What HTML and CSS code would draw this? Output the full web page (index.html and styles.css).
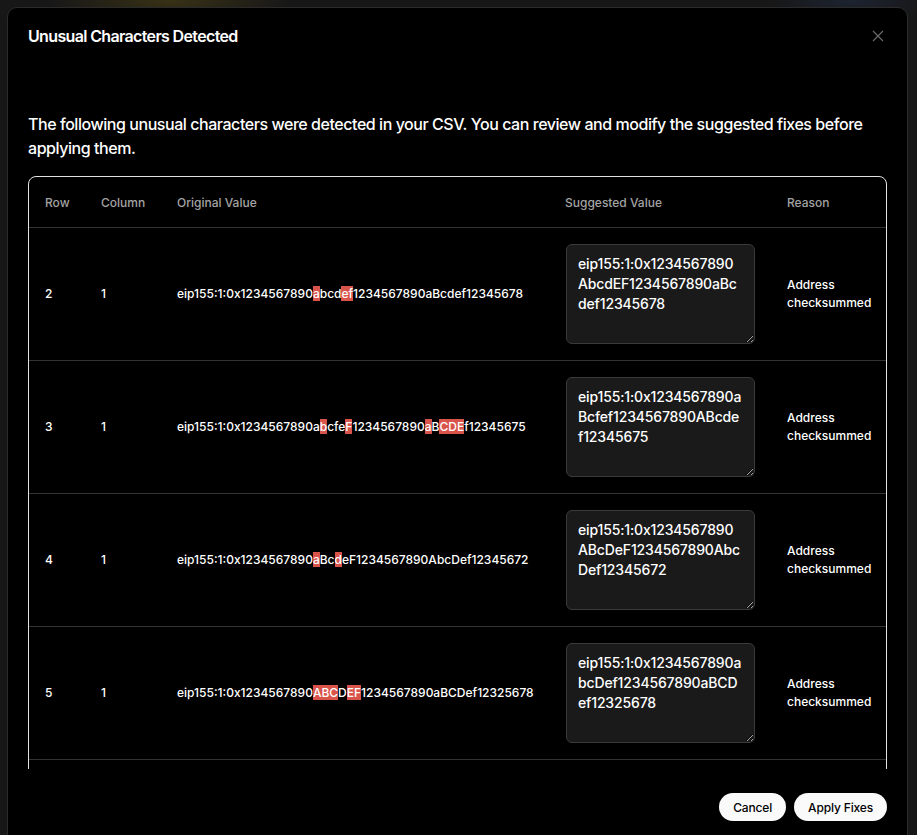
FILE: index.html
```html
<!DOCTYPE html>
<html lang="en">
<head>
<meta charset="utf-8">
<title>Unusual Characters Detected</title>
<link rel="stylesheet" href="styles.css">
</head>
<body>
<div class="backdrop">
  <div class="modal">
    <div class="modal-header">
      <h2 class="modal-title">Unusual Characters Detected</h2>
      <button class="close" aria-label="Close">
        <svg width="12" height="12" viewBox="0 0 12 12"><path d="M1 1 L11 11 M11 1 L1 11" stroke="currentColor" stroke-width="1.2" fill="none"/></svg>
      </button>
    </div>
    <div class="modal-body">
      <p class="desc">The following unusual characters were detected in your CSV. You can review and modify the suggested fixes before applying them.</p>
      <div class="table-wrap">
        <table class="fixes">
          <colgroup>
            <col class="c-row"><col class="c-col"><col class="c-orig"><col class="c-sugg"><col class="c-reason">
          </colgroup>
          <thead>
            <tr><th>Row</th><th>Column</th><th>Original Value</th><th>Suggested Value</th><th>Reason</th></tr>
          </thead>
          <tbody>
            <tr>
              <td>2</td><td>1</td>
              <td class="orig">eip155:1:0x1234567890<span class="hl">a</span>bcd<span class="hl">ef</span>1234567890aBcdef12345678</td>
              <td><textarea class="sugg">eip155:1:0x1234567890AbcdEF1234567890aBcdef12345678</textarea></td>
              <td class="reason">Address checksummed</td>
            </tr>
            <tr>
              <td>3</td><td>1</td>
              <td class="orig">eip155:1:0x1234567890a<span class="hl">b</span>cfe<span class="hl">F</span>1234567890<span class="hl">a</span>B<span class="hl">CDE</span>f12345675</td>
              <td><textarea class="sugg">eip155:1:0x1234567890aBcfef1234567890ABcdef12345675</textarea></td>
              <td class="reason">Address checksummed</td>
            </tr>
            <tr>
              <td>4</td><td>1</td>
              <td class="orig">eip155:1:0x1234567890<span class="hl">a</span>Bc<span class="hl">d</span>eF1234567890AbcDef12345672</td>
              <td><textarea class="sugg">eip155:1:0x1234567890ABcDeF1234567890AbcDef12345672</textarea></td>
              <td class="reason">Address checksummed</td>
            </tr>
            <tr>
              <td>5</td><td>1</td>
              <td class="orig">eip155:1:0x1234567890<span class="hl">ABC</span>D<span class="hl">EF</span>1234567890aBCDef12325678</td>
              <td><textarea class="sugg">eip155:1:0x1234567890abcDef1234567890aBCDef12325678</textarea></td>
              <td class="reason">Address checksummed</td>
            </tr>
          </tbody>
        </table>
      </div>
    </div>
    <div class="modal-footer">
      <button class="btn">Cancel</button>
      <button class="btn">Apply Fixes</button>
    </div>
  </div>
</div>
</body>
</html>
```
FILE: styles.css
```css
* { box-sizing: border-box; }
html, body {
  margin: 0;
  height: 100%;
  overflow: hidden;
}
body {
  background:
    radial-gradient(ellipse 120px 30px at 170px 0px, rgba(120, 100, 20, 0.35), transparent),
    radial-gradient(ellipse 80px 25px at 850px 0px, rgba(40, 60, 100, 0.35), transparent),
    #171717;
  font-family: Inter, "Liberation Sans", sans-serif;
  color: #fff;
}
.backdrop {
  padding: 7px 9px 0 7px;
}
.modal {
  background: #000;
  border: 1px solid #2b2b2b;
  border-radius: 10px;
  height: 860px;
  padding: 16px 20px;
  display: flex;
  flex-direction: column;
}
.modal-header {
  display: flex;
  justify-content: space-between;
  align-items: center;
  height: 24px;
}
.modal-title {
  margin: 0;
  font-size: 16px;
  line-height: 24px;
  font-weight: 600;
  letter-spacing: -0.65px;
}
.close {
  background: none;
  border: 0;
  padding: 0;
  color: #6b6b6b;
  width: 12px;
  height: 12px;
  display: flex;
  margin-right: 3px;
}
.modal-body {
  margin-top: 64px;
  height: 657px;
  overflow: hidden;
  display: flex;
  flex-direction: column;
}
.desc {
  margin: 0 0 16px;
  font-size: 16px;
  line-height: 24px;
  font-weight: 500;
  letter-spacing: -0.45px;
}
.table-wrap {
  border: 1px solid #e2e2e2;
  border-radius: 8px;
  flex: none;
  min-height: 700px;
}
.fixes {
  width: 100%;
  border-collapse: collapse;
  table-layout: fixed;
  font-size: 12px;
}
.c-row { width: 56px; }
.c-col { width: 76px; }
.c-orig { width: 388px; }
.c-sugg { width: 222px; }
.c-reason { width: auto; }
.fixes th {
  text-align: left;
  color: #a3a3a3;
  font-weight: 500;
  height: 50px;
  padding: 2px 16px 0;
  border-bottom: 1px solid #333;
}
.fixes td {
  padding: 16px;
  height: 133px;
  border-bottom: 1px solid #333;
  vertical-align: middle;
  line-height: 18px;
  font-weight: 500;
}
.orig { white-space: nowrap; }
.hl {
  background: #d9544a;
  color: #fff;
}
.sugg {
  display: block;
  width: 189px;
  height: 100px;
  margin-left: 1px;
  background: #1a1a1a;
  border: 1px solid #3a3a3a;
  border-radius: 6px;
  color: #fff;
  font-family: Inter, "Liberation Sans", sans-serif;
  font-size: 14px;
  font-weight: 500;
  line-height: 20px;
  letter-spacing: -0.15px;
  padding: 9px 11px 9px 11px;
  resize: vertical;
  outline: none;
}
.reason { line-height: 18px; }
.modal-footer {
  display: flex;
  justify-content: flex-end;
  gap: 8px;
  margin-top: 24px;
}
.btn {
  height: 28px;
  padding: 0 14px;
  border: 0;
  border-radius: 14px;
  background: #fafafa;
  color: #000;
  font-family: Inter, "Liberation Sans", sans-serif;
  font-size: 12px;
  font-weight: 500;
  letter-spacing: -0.15px;
}
```
